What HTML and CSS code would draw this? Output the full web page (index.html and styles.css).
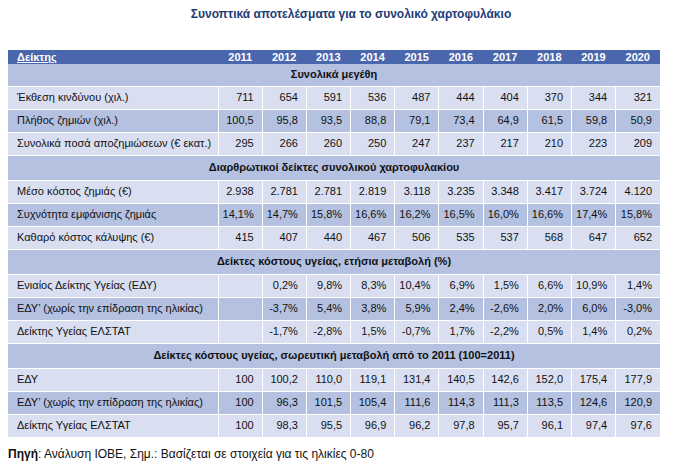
FILE: index.html
```html
<!DOCTYPE html>
<html lang="el">
<head>
<meta charset="utf-8">
<link rel="stylesheet" href="styles.css">
</head>
<body>
<div class="page">
  <h1 class="title">Συνοπτικά αποτελέσματα για το συνολικό χαρτοφυλάκιο</h1>
  <table class="tbl">
    <colgroup>
      <col class="c-label">
      <col class="c-year"><col class="c-year"><col class="c-year"><col class="c-year"><col class="c-year">
      <col class="c-year"><col class="c-year"><col class="c-year"><col class="c-year"><col class="c-year">
    </colgroup>
    <thead>
      <tr class="head">
        <th class="lbl"><span class="ul">Δείκτης</span></th>
        <th>2011</th><th>2012</th><th>2013</th><th>2014</th><th>2015</th><th>2016</th><th>2017</th><th>2018</th><th>2019</th><th>2020</th>
      </tr>
    </thead>
    <tbody>
      <tr class="sec first"><td colspan="11">Συνολικά μεγέθη</td></tr>
      <tr class="row light"><td class="lbl">Έκθεση κινδύνου (χιλ.)</td><td>711</td><td>654</td><td>591</td><td>536</td><td>487</td><td>444</td><td>404</td><td>370</td><td>344</td><td>321</td></tr>
      <tr class="row dark"><td class="lbl">Πλήθος ζημιών (χιλ.)</td><td>100,5</td><td>95,8</td><td>93,5</td><td>88,8</td><td>79,1</td><td>73,4</td><td>64,9</td><td>61,5</td><td>59,8</td><td>50,9</td></tr>
      <tr class="row light"><td class="lbl">Συνολικά ποσά αποζημιώσεων (€ εκατ.)</td><td>295</td><td>266</td><td>260</td><td>250</td><td>247</td><td>237</td><td>217</td><td>210</td><td>223</td><td>209</td></tr>
      <tr class="sec"><td colspan="11">Διαρθρωτικοί δείκτες συνολικού χαρτοφυλακίου</td></tr>
      <tr class="row light"><td class="lbl">Μέσο κόστος ζημιάς (€)</td><td>2.938</td><td>2.781</td><td>2.781</td><td>2.819</td><td>3.118</td><td>3.235</td><td>3.348</td><td>3.417</td><td>3.724</td><td>4.120</td></tr>
      <tr class="row dark"><td class="lbl">Συχνότητα εμφάνισης ζημιάς</td><td>14,1%</td><td>14,7%</td><td>15,8%</td><td>16,6%</td><td>16,2%</td><td>16,5%</td><td>16,0%</td><td>16,6%</td><td>17,4%</td><td>15,8%</td></tr>
      <tr class="row light"><td class="lbl">Καθαρό κόστος κάλυψης (€)</td><td>415</td><td>407</td><td>440</td><td>467</td><td>506</td><td>535</td><td>537</td><td>568</td><td>647</td><td>652</td></tr>
      <tr class="sec"><td colspan="11">Δείκτες κόστους υγείας, ετήσια μεταβολή (%)</td></tr>
      <tr class="row light"><td class="lbl">Ενιαίος Δείκτης Υγείας (ΕΔΥ)</td><td></td><td>0,2%</td><td>9,8%</td><td>8,3%</td><td>10,4%</td><td>6,9%</td><td>1,5%</td><td>6,6%</td><td>10,9%</td><td>1,4%</td></tr>
      <tr class="row dark"><td class="lbl">ΕΔΥ’ (χωρίς την επίδραση της ηλικίας)</td><td></td><td>-3,7%</td><td>5,4%</td><td>3,8%</td><td>5,9%</td><td>2,4%</td><td>-2,6%</td><td>2,0%</td><td>6,0%</td><td>-3,0%</td></tr>
      <tr class="row light"><td class="lbl">Δείκτης Υγείας ΕΛΣΤΑΤ</td><td></td><td>-1,7%</td><td>-2,8%</td><td>1,5%</td><td>-0,7%</td><td>1,7%</td><td>-2,2%</td><td>0,5%</td><td>1,4%</td><td>0,2%</td></tr>
      <tr class="sec"><td colspan="11">Δείκτες κόστους υγείας, σωρευτική μεταβολή από το 2011 (100=2011)</td></tr>
      <tr class="row light"><td class="lbl">ΕΔΥ</td><td>100</td><td>100,2</td><td>110,0</td><td>119,1</td><td>131,4</td><td>140,5</td><td>142,6</td><td>152,0</td><td>175,4</td><td>177,9</td></tr>
      <tr class="row dark"><td class="lbl">ΕΔΥ’ (χωρίς την επίδραση της ηλικίας)</td><td>100</td><td>96,3</td><td>101,5</td><td>105,4</td><td>111,6</td><td>114,3</td><td>111,3</td><td>113,5</td><td>124,6</td><td>120,9</td></tr>
      <tr class="row light"><td class="lbl">Δείκτης Υγείας ΕΛΣΤΑΤ</td><td>100</td><td>98,3</td><td>95,5</td><td>96,9</td><td>96,2</td><td>97,8</td><td>95,7</td><td>96,1</td><td>97,4</td><td>97,6</td></tr>
    </tbody>
  </table>
  <p class="note"><b>Πηγή</b>: Ανάλυση ΙΟΒΕ, Σημ.: Βασίζεται σε στοιχεία για τις ηλικίες 0-80</p>
</div>
</body>
</html>
```

FILE: styles.css
```css
html, body {
  margin: 0;
  padding: 0;
  background: #ffffff;
}
.page {
  padding: 7px 0 0 8px;
  font-family: "Liberation Sans", Arial, sans-serif;
  font-size: 11px;
  color: #111111;
}
.title {
  margin: 0;
  width: 652px;
  padding-left: 34px;
  box-sizing: border-box;
  text-align: center;
  font-size: 12px;
  line-height: 14px;
  font-weight: bold;
  color: #1f3c78;
}
.tbl {
  margin-top: 29px;
  width: 652px;
  table-layout: fixed;
  border-collapse: collapse;
  border-spacing: 0;
}
.c-label { width: 210px; }
.c-year { width: 44.2px; }
.tbl th, .tbl td {
  padding: 0 8px 0 0;
  text-align: right;
  white-space: nowrap;
  overflow: hidden;
  box-sizing: border-box;
}
.head th {
  background: #4a66ad;
  color: #ffffff;
  font-weight: bold;
  height: 14px;
  line-height: 14px;
  padding-right: 10px;
}
.head th.lbl {
  text-align: left;
  padding-left: 9px;
}
.ul {
  text-decoration: underline;
}
.sec td {
  background: #b4c1e1;
  text-align: center;
  font-weight: bold;
  height: 25px;
  vertical-align: top;
  padding: 4px 0 0 0;
  line-height: 14px;
  border-top: 1px solid #ffffff;
}
.sec.first td {
  border-top: none;
  height: 22px;
  padding-top: 3px;
}
.row td {
  height: 23px;
  line-height: 14px;
  border: 1px solid #ffffff;
  vertical-align: middle;
  padding-bottom: 2px;
}
.row td:first-child { border-left: none; }
.row td:last-child { border-right: none; }
.row td.lbl {
  text-align: left;
  padding-left: 9px;
}
.light td { background: #d9dff1; }
.dark td { background: #b4c1e1; }
.note {
  margin: 9px 0 0 0;
  font-size: 12px;
  line-height: 14px;
  color: #111111;
}
.note b { font-weight: bold; }
```
